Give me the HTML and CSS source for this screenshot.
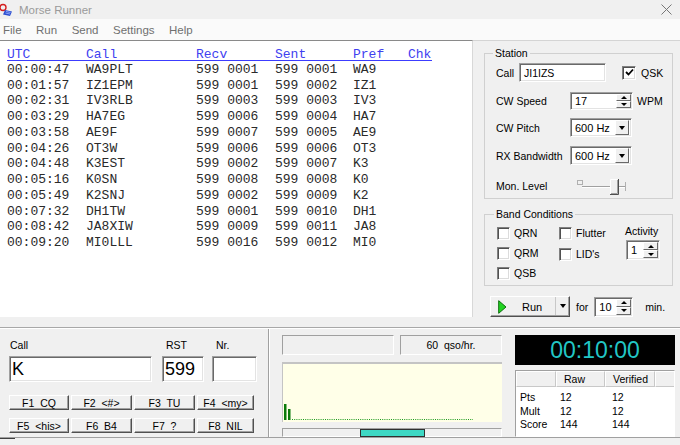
FILE: index.html
```html
<!DOCTYPE html>
<html>
<head>
<meta charset="utf-8">
<title>Morse Runner</title>
<link rel="stylesheet" href="styles.css">
</head>
<body>
<div class="titlebar">
  <svg class="app-icon" width="14" height="14" viewBox="0 0 14 14">
    <circle cx="4" cy="4.5" r="3" fill="none" stroke="#d42020" stroke-width="1.4"/>
    <path d="M6 7 L13 8.5 L11 13 L4 11.5 Z" fill="#2c4fd0"/>
    <path d="M7 8.5 L11.5 9.5 M6.5 10 L11 11" stroke="#9fb4ff" stroke-width="0.8"/>
  </svg>
  <span class="title">Morse Runner</span>
  <svg class="close" width="11" height="11" viewBox="0 0 11 11">
    <path d="M0.5 0.5 L10.5 10.5 M10.5 0.5 L0.5 10.5" stroke="#777" stroke-width="1"/>
  </svg>
</div>
<div class="menubar">
  <span>File</span><span>Run</span><span>Send</span><span>Settings</span><span>Help</span>
</div>
<div class="main">
  <div class="log">
    <div class="lrow lhead"><span class="c1">UTC</span><span class="c2">Call</span><span class="c3">Recv</span><span class="c4">Sent</span><span class="c5">Pref</span><span class="c6">Chk</span></div>
    <div class="lrow"><span class="c1">00:00:47</span><span class="c2">WA9PLT</span><span class="c3">599 0001</span><span class="c4">599 0001</span><span class="c5">WA9</span></div>
    <div class="lrow"><span class="c1">00:01:57</span><span class="c2">IZ1EPM</span><span class="c3">599 0001</span><span class="c4">599 0002</span><span class="c5">IZ1</span></div>
    <div class="lrow"><span class="c1">00:02:31</span><span class="c2">IV3RLB</span><span class="c3">599 0003</span><span class="c4">599 0003</span><span class="c5">IV3</span></div>
    <div class="lrow"><span class="c1">00:03:29</span><span class="c2">HA7EG</span><span class="c3">599 0006</span><span class="c4">599 0004</span><span class="c5">HA7</span></div>
    <div class="lrow"><span class="c1">00:03:58</span><span class="c2">AE9F</span><span class="c3">599 0007</span><span class="c4">599 0005</span><span class="c5">AE9</span></div>
    <div class="lrow"><span class="c1">00:04:26</span><span class="c2">OT3W</span><span class="c3">599 0006</span><span class="c4">599 0006</span><span class="c5">OT3</span></div>
    <div class="lrow"><span class="c1">00:04:48</span><span class="c2">K3EST</span><span class="c3">599 0002</span><span class="c4">599 0007</span><span class="c5">K3</span></div>
    <div class="lrow"><span class="c1">00:05:16</span><span class="c2">K0SN</span><span class="c3">599 0008</span><span class="c4">599 0008</span><span class="c5">K0</span></div>
    <div class="lrow"><span class="c1">00:05:49</span><span class="c2">K2SNJ</span><span class="c3">599 0002</span><span class="c4">599 0009</span><span class="c5">K2</span></div>
    <div class="lrow"><span class="c1">00:07:32</span><span class="c2">DH1TW</span><span class="c3">599 0001</span><span class="c4">599 0010</span><span class="c5">DH1</span></div>
    <div class="lrow"><span class="c1">00:08:42</span><span class="c2">JA8XIW</span><span class="c3">599 0009</span><span class="c4">599 0011</span><span class="c5">JA8</span></div>
    <div class="lrow"><span class="c1">00:09:20</span><span class="c2">MI0LLL</span><span class="c3">599 0016</span><span class="c4">599 0012</span><span class="c5">MI0</span></div>
  </div>
  <div class="side">
    <fieldset class="group station">
      <legend>Station</legend>
      <div class="srow r1">
        <span class="lbl-call">Call</span>
        <div class="field callf"><span class="val">JI1IZS</span></div>
        <span class="cb checked qsk-cb"><svg width="9" height="9" viewBox="0 0 9 9"><path d="M1 4 L3.5 6.5 L8 1.5" fill="none" stroke="#000" stroke-width="1.8"/></svg></span>
        <span class="qsk">QSK</span>
      </div>
      <div class="srow r2">
        <span class="lbl">CW Speed</span>
        <div class="field spin"><span class="val">17</span><span class="spin-btns"><span class="sb up"></span><span class="sb down"></span></span></div>
        <span class="unit">WPM</span>
      </div>
      <div class="srow r3">
        <span class="lbl">CW Pitch</span>
        <div class="field combo"><span class="val">600 Hz</span><span class="dd"></span></div>
      </div>
      <div class="srow r4">
        <span class="lbl">RX Bandwidth</span>
        <div class="field combo"><span class="val">600 Hz</span><span class="dd"></span></div>
      </div>
      <div class="srow r5">
        <span class="lbl mon">Mon. Level</span>
        <svg class="slider" width="52" height="18" viewBox="0 0 52 18">
          <rect x="1.5" y="2.5" width="5" height="4" fill="none" stroke="#b0b0b0"/>
          <line x1="6" y1="8.5" x2="50" y2="8.5" stroke="#a0a0a0"/>
          <line x1="6" y1="9.5" x2="50" y2="9.5" stroke="#ffffff"/>
          <line x1="49.5" y1="4" x2="49.5" y2="13" stroke="#b0b0b0"/>
          <rect x="34" y="1" width="8" height="15" fill="#f0f0f0"/>
          <path d="M34.5 16 L34.5 1.5 L41.5 1.5" fill="none" stroke="#ffffff"/>
          <path d="M34 16.5 L42.5 16.5 L42.5 1" fill="none" stroke="#505050"/>
          <path d="M35 15.5 L41.5 15.5 L41.5 2" fill="none" stroke="#a0a0a0"/>
        </svg>
      </div>
    </fieldset>
    <fieldset class="group band">
      <legend>Band Conditions</legend>
      <div class="bgrid">
        <div class="chk"><span class="cb"></span><span>QRN</span></div>
        <div class="chk"><span class="cb"></span><span>Flutter</span></div>
        <div class="activity">
          <span class="act-lbl">Activity</span>
          <div class="field spin act"><span class="val">1</span><span class="spin-btns"><span class="sb up"></span><span class="sb down"></span></span></div>
        </div>
        <div class="chk"><span class="cb"></span><span>QRM</span></div>
        <div class="chk lid"><span class="cb"></span><span>LID's</span></div>
        <div class="chk"><span class="cb"></span><span>QSB</span></div>
      </div>
    </fieldset>
    <div class="runrow">
      <div class="runbtn">
        <span class="run-main">
          <svg width="9" height="14" viewBox="0 0 9 14"><path d="M0.7 0.7 L8 7 L0.7 13.3 Z" fill="#22d422" stroke="#0b6e0b" stroke-width="1"/></svg>
          <span class="run-txt">Run</span>
        </span>
        <span class="run-dd"></span>
      </div>
      <span class="for">for</span>
      <div class="field spin mins"><span class="val">10</span><span class="spin-btns"><span class="sb up"></span><span class="sb down"></span></span></div>
      <span class="min">min.</span>
    </div>
  </div>
</div>
<div class="splitter"></div>
<div class="bottom">
  <div class="entry">
    <div class="egrid">
      <span class="elbl">Call</span><span class="elbl">RST</span><span class="elbl">Nr.</span>
      <div class="field big"><span class="val">K</span></div>
      <div class="field big"><span class="val">599</span></div>
      <div class="field big"><span class="val"></span></div>
    </div>
    <div class="fkeys">
      <span class="btn">F1  CQ</span><span class="btn">F2  &lt;#&gt;</span><span class="btn">F3  TU</span><span class="btn">F4  &lt;my&gt;</span>
      <span class="btn">F5  &lt;his&gt;</span><span class="btn">F6  B4</span><span class="btn">F7  ?</span><span class="btn">F8  NIL</span>
    </div>
  </div>
  <div class="divider"></div>
  <div class="meters">
    <div class="mrow"><div class="pane p1"></div><div class="pane p2">60&nbsp; qso/hr.</div></div>
    <div class="graph">
      <svg width="218" height="58" viewBox="0 0 218 58">
        <rect x="1" y="40" width="2.5" height="16" fill="#0a7a0a"/>
        <rect x="5" y="45" width="2.5" height="11" fill="#0a7a0a"/>
        <line x1="9" y1="55.5" x2="190" y2="55.5" stroke="#1a9a1a" stroke-dasharray="1 1.2"/>
      </svg>
    </div>
    <div class="progress"><span class="pblock"></span></div>
  </div>
  <div class="scorebox">
    <div class="clock">00:10:00</div>
    <div class="table">
      <div class="thead"><span class="th"></span><span class="th">Raw</span><span class="th">Verified</span><span class="th last"></span></div>
      <div class="trow"><span>Pts</span><span>12</span><span>12</span></div>
      <div class="trow"><span>Mult</span><span>12</span><span>12</span></div>
      <div class="trow"><span>Score</span><span>144</span><span>144</span></div>
    </div>
  </div>
</div>
<div class="status"><span class="st-dark"></span></div>
</body>
</html>
```

FILE: styles.css
```css
* { box-sizing: border-box; }
html, body { margin: 0; padding: 0; }
body {
  width: 680px;
  height: 445px;
  overflow: hidden;
  background: #f0f0f0;
  font-family: "Liberation Sans", Arial, sans-serif;
  font-size: 10.5px;
  color: #000;
}

/* title + menu */
.titlebar {
  height: 19px;
  display: flex;
  align-items: center;
  background: #f0f0f0;
}
.app-icon { margin-left: -1px; }
.title { margin-left: 6px; font-size: 11.5px; color: #9a9a9a; }
.close { margin-left: auto; margin-right: 8px; }
.menubar {
  height: 21px;
  display: flex;
  align-items: center;
  gap: 14.5px;
  padding-left: 3px;
  background: #fafafa;
  font-size: 11.5px;
  color: #707070;
}

/* main */
.main { height: 277px; display: flex; }
.log {
  width: 473px;
  background: #fff;
  border-top: 1px solid #8a8a8a;
  border-right: 1px solid #d8d8d8;
  padding: 6px 0 0 7px;
  font-family: "Liberation Mono", "Courier New", monospace;
  font-size: 13px;
  color: #2a2a2a;
}
.lrow { display: flex; line-height: 15.73px; white-space: pre; }
.lhead {
  display: inline-flex;
  line-height: 11px;
  color: #4040f0;
  border-bottom: 1px solid #3c3cff;
}
.c1 { width: 79px; }
.c2 { width: 110px; }
.c3 { width: 79px; }
.c4 { width: 78px; }
.c5 { width: 55px; }
.c6 { width: 24px; }

.side {
  width: 207px;
  border-top: 1px solid #d4d4d4;
  padding: 6px 7px 0 11px;
}
.group {
  margin: 0;
  border: 1px solid #d0d0d0;
  min-width: 0;
}
.group legend {
  padding: 0 2px;
  margin-left: -3px;
  line-height: 13px;
  font-size: 10.5px;
}
.station { padding: 3px 6px 4px 11px; }
.srow { display: flex; align-items: center; }
.r1 { height: 19px; }
.r2 { height: 18px; margin-top: 10px; }
.r3 { height: 19px; margin-top: 8px; }
.r4 { height: 19px; margin-top: 9px; }
.r5 { height: 16px; margin-top: 13px; }
.lbl-call { width: 23px; }
.lbl { width: 74px; }
.mon { width: 80px; }
.slider { display: block; margin-top: 1px; }

.field {
  display: flex;
  align-items: stretch;
  background: #fff;
  border: 1px solid;
  border-color: #a0a0a0 #ffffff #ffffff #a0a0a0;
  box-shadow: inset 1px 1px 0 #696969, inset -1px -1px 0 #e3e3e3;
  padding: 1px 1px 1px 1px;
  font-size: 11px;
}
.field .val { flex: 1; padding-left: 3px; display: flex; align-items: center; }
.callf { width: 87px; height: 19px; }
.callf .val { font-size: 10.5px; }
.spin { width: 63px; height: 18px; }
.combo { width: 62px; height: 19px; }
.spin-btns { display: flex; flex-direction: column; width: 15px; }
.sb {
  flex: 1;
  display: flex;
  align-items: center;
  justify-content: center;
  background: #f0f0f0;
  border: 1px solid;
  border-color: #ffffff #696969 #696969 #ffffff;
}
.sb.up::after {
  content: "";
  border-left: 3px solid transparent;
  border-right: 3px solid transparent;
  border-bottom: 3px solid #000;
}
.sb.down::after {
  content: "";
  border-left: 3px solid transparent;
  border-right: 3px solid transparent;
  border-top: 3px solid #000;
}
.dd {
  width: 14px;
  display: flex;
  align-items: center;
  justify-content: center;
  background: #f0f0f0;
  border: 1px solid;
  border-color: #ffffff #696969 #696969 #ffffff;
  margin-right: 1px;
}
.dd::after {
  content: "";
  border-left: 3.5px solid transparent;
  border-right: 3.5px solid transparent;
  border-top: 4px solid #000;
}
.unit { margin-left: 4px; }

.cb {
  width: 13px;
  height: 13px;
  flex: none;
  display: inline-flex;
  align-items: center;
  justify-content: center;
  background: #fff;
  border: 1px solid;
  border-color: #808080 #ffffff #ffffff #808080;
  box-shadow: inset 1px 1px 0 #505050, inset -1px -1px 0 #dcdcdc;
}
.qsk-cb { margin-left: 16px; width: 14px; height: 14px; }
.qsk { margin-left: 5px; }

.band { margin-top: 9px; padding: 2px 4px 2px 12px; }
.bgrid {
  display: grid;
  grid-template-columns: 62px 66px auto;
  grid-template-rows: 20px 20px 20px;
}
.chk { display: flex; align-items: center; gap: 4px; }
.chk .cb { margin-right: 0; }
.chk span + span { margin-left: 0; }
.lid { padding-top: 2px; }
.activity {
  grid-column: 3;
  grid-row: 1 / span 3;
  display: flex;
  flex-direction: column;
  padding-top: 1px;
}
.act-lbl { line-height: 14px; }
.act { width: 34px; height: 20px; margin-top: 2px; margin-left: 1px; }

.runrow {
  margin-top: 10px;
  display: flex;
  align-items: center;
  padding-left: 6px;
}
.runbtn {
  width: 80px;
  height: 21px;
  display: flex;
  background: #f0f0f0;
  border: 1px solid;
  border-color: #ffffff #505050 #505050 #ffffff;
  box-shadow: inset -1px -1px 0 #a0a0a0;
}
.run-main {
  flex: 1;
  display: flex;
  align-items: center;
  padding-left: 7px;
}
.run-txt { margin-left: 15px; font-size: 11px; }
.run-dd {
  width: 14px;
  display: flex;
  align-items: center;
  justify-content: center;
  border-left: 1px solid #c8c8c8;
  margin-bottom: 1px;
}
.run-dd::after {
  content: "";
  border-left: 3.5px solid transparent;
  border-right: 3.5px solid transparent;
  border-top: 4px solid #000;
}
.for { margin-left: 6px; }
.mins { width: 39px; height: 20px; margin-left: 6px; }
.min { margin-left: 12px; }

.splitter {
  height: 11px;
  border-bottom: 1px solid #a8a8a8;
}

/* bottom */
.bottom {
  height: 109px;
  display: flex;
  border-top: 1px solid #ffffff;
}
.entry { width: 268px; padding: 9px 0 0 9px; }
.egrid {
  display: grid;
  grid-template-columns: 143px 42px 43px;
  column-gap: 10px;
  grid-template-rows: 14px 26px;
  row-gap: 4px;
}
.egrid .field:nth-of-type(2) { margin-left: 0; }
.elbl { line-height: 14px; padding-left: 1px; }
.elbl:nth-child(2), .elbl:nth-child(3) { padding-left: 4px; }
.egrid .elbl:nth-child(3) { margin-left: -2px; }
.egrid .field:nth-child(6) { margin-left: -2px; }
.big { height: 26px; font-size: 18px; }
.big .val { padding-left: 1px; }
.fkeys {
  margin-top: 13px;
  display: grid;
  grid-template-columns: 60px 61px 61px 57px;
  column-gap: 2px;
  row-gap: 8px;
}
.btn {
  height: 15px;
  display: flex;
  align-items: center;
  justify-content: center;
  white-space: pre;
  background: #f0f0f0;
  border: 1px solid;
  border-color: #ffffff #505050 #505050 #ffffff;
  box-shadow: inset -1px -1px 0 #a0a0a0;
  font-size: 10.5px;
}
.divider {
  width: 2px;
  border-left: 1px solid #a0a0a0;
  border-right: 1px solid #ffffff;
}
.meters { width: 238px; padding: 6px 6px 0 12px; }
.mrow { display: flex; gap: 6px; }
.pane {
  height: 20px;
  border: 1px solid;
  border-color: #a0a0a0 #ffffff #ffffff #a0a0a0;
  display: flex;
  align-items: center;
  justify-content: center;
}
.p1 { width: 112px; }
.p2 { width: 102px; }
.graph {
  margin-top: 7px;
  height: 60px;
  background: #ffffe8;
  border-top: 2px solid #c4c4c4;
  border-left: 1px solid #c4c4c4;
}
.graph svg { display: block; }
.progress {
  margin-top: 6px;
  height: 9px;
  border: 1px solid;
  border-color: #a0a0a0 #ffffff #ffffff #a0a0a0;
  padding-left: 77px;
  display: flex;
}
.pblock {
  width: 65px;
  height: 8px;
  background: #3ed8c4;
  border: 1px solid #303030;
}
.scorebox { width: 172px; padding: 6px 5px 0 7px; }
.clock {
  height: 30px;
  background: #000;
  color: #22c6c6;
  font-size: 23px;
  display: flex;
  align-items: center;
  justify-content: center;
}
.table {
  margin-top: 5px;
  height: 67px;
  background: #fff;
  border: 1px solid;
  border-color: #a0a0a0 #ffffff #ffffff #a0a0a0;
}
.thead {
  display: grid;
  grid-template-columns: 40px 49px 50px 1fr;
  height: 16px;
  background: #f0f0f0;
}
.th {
  display: flex;
  align-items: center;
  padding-left: 7px;
  border-right: 1px solid #c8c8c8;
  border-bottom: 1px solid #c8c8c8;
  border-left: 1px solid #ffffff;
  border-top: 1px solid #ffffff;
}
.th.last { border-right: none; }
.trow {
  display: grid;
  grid-template-columns: 40px 52px 50px;
  line-height: 13.5px;
  padding-left: 4px;
}
.thead + .trow { margin-top: 4px; }
.status {
  height: 8px;
  border-top: 1px solid #a0a0a0;
  display: flex;
}
.st-dark { width: 15px; height: 1px; background: #404040; }
```
